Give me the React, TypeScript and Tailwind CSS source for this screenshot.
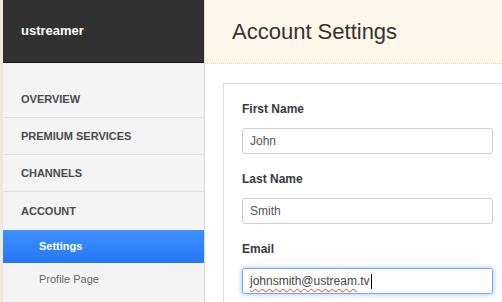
import React from "react";

const nav = ["OVERVIEW", "PREMIUM SERVICES", "CHANNELS"];

function Field({ label, value, focused }: { label: string; value: string; focused?: boolean }) {
  return (
    <div className="flex flex-col">
      <div className="h-[44px] pt-[18px] text-[12px] font-bold leading-[14px] text-[#3a3a3a]">{label}</div>
      {focused ? (
        <div className="flex h-[26px] w-[251px] items-center rounded-[3px] border border-[#6fa8fb] px-[7px] text-[12px] text-[#444] shadow-[0_0_4px_1px_rgba(90,150,250,0.45)]">
          <span className="underline decoration-[#e0453a] decoration-wavy decoration-[1px] underline-offset-[3px]">johnsmith@ustream</span>
          <span>.tv</span>
          <span className="ml-px h-[15px] w-px bg-black" />
        </div>
      ) : (
        <div className="flex h-[26px] w-[251px] items-center rounded-[3px] border border-[#cdcdcd] px-[7px] text-[12px] text-[#555]">
          {value}
        </div>
      )}
    </div>
  );
}

export default function App() {
  return (
    <div
      className="flex h-[302px] w-[502px] overflow-hidden bg-[#eee9df] pl-[3px]"
      style={{ fontFamily: '"Liberation Sans", Arial, sans-serif' }}
    >
      {/* Sidebar */}
      <aside className="flex w-[202px] shrink-0 flex-col border-r border-[#dcdcdc] bg-[#f4f4f4]">
        <div className="flex h-[63px] items-center border-b border-[#111] bg-[#313131] pl-[18px] text-[13px] font-bold text-white">
          ustreamer
        </div>
        <nav className="pt-[18px]">
          {nav.map((item) => (
            <div
              key={item}
              className="flex h-[37px] items-center border-b border-[#e0e0e0] pl-[18px] text-[11px] font-bold text-[#4a4a4a]"
            >
              {item}
            </div>
          ))}
          <div className="flex h-[38px] items-center pl-[18px] text-[11px] font-bold text-[#4a4a4a]">ACCOUNT</div>
          <div className="flex h-[33px] items-center bg-gradient-to-b from-[#3d90fd] to-[#2676f9] pl-[36px] text-[11px] font-bold text-white">
            Settings
          </div>
          <div className="flex h-[33px] items-center pl-[36px] text-[11px] text-[#666]">Profile Page</div>
        </nav>
      </aside>

      {/* Main */}
      <main className="flex flex-1 flex-col bg-white">
        <header className="flex h-[64px] shrink-0 items-center border-b border-dotted border-[#e2dac4] bg-[#fdf8e9] pl-[27px] text-[22px] text-[#333]">
          Account Settings
        </header>
        <div className="flex-1 pl-[18px] pt-[19px]">
          <div className="h-full border-l border-t border-[#dcdcdc] pl-[18px]">
            <div className="flex flex-col">
              <Field label="First Name" value="John" />
              <Field label="Last Name" value="Smith" />
              <Field label="Email" value="johnsmith@ustream.tv" focused />
            </div>
          </div>
        </div>
      </main>
    </div>
  );
}
